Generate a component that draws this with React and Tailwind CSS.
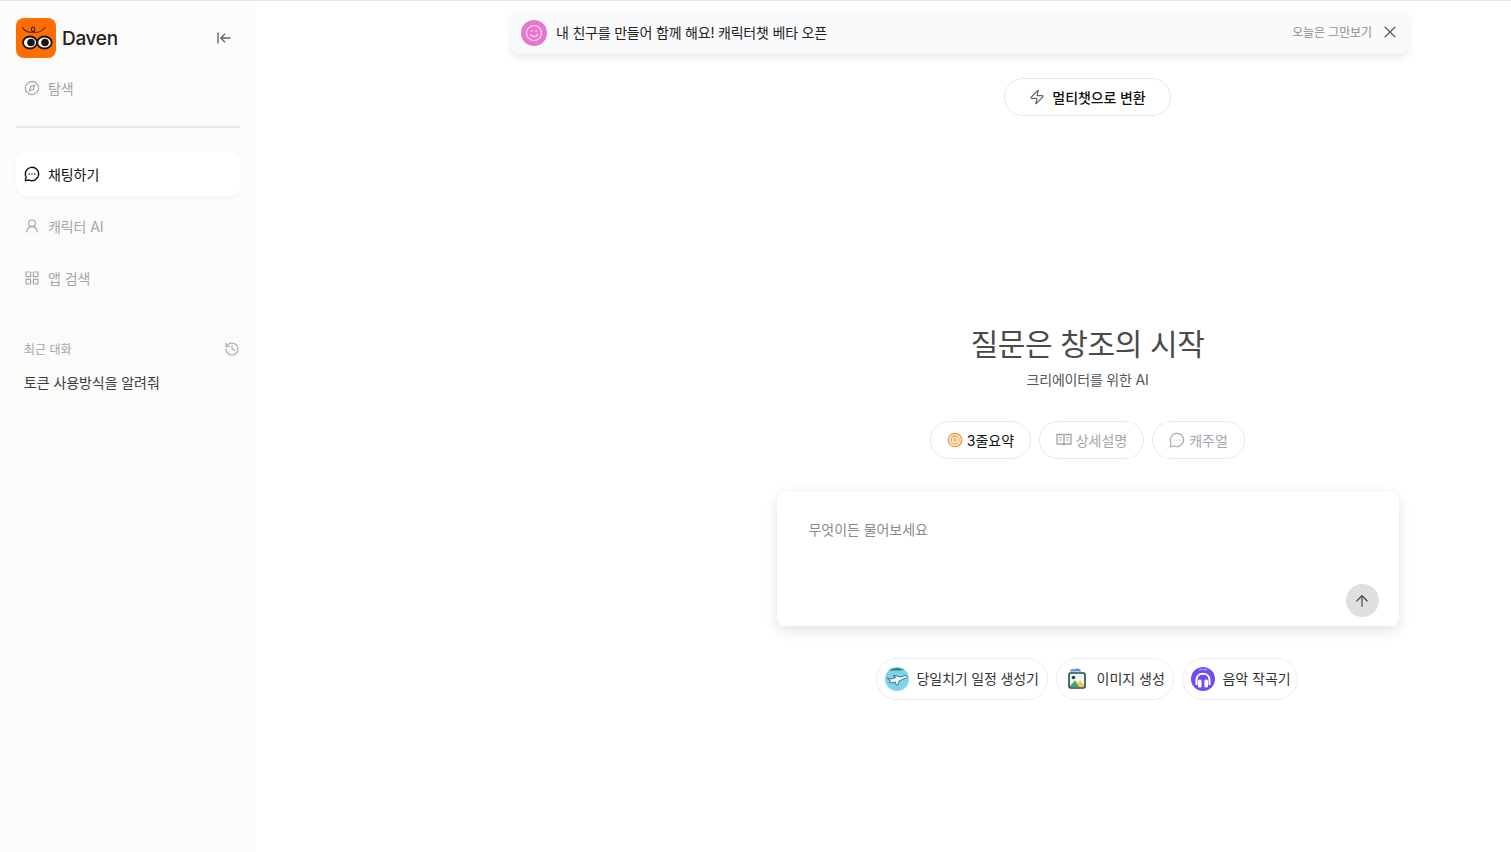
import React from "react";
import { Compass, MessageCircleMore, UserRound, LayoutGrid, History, X, Zap, ArrowUp } from "lucide-react";

function Logo() {
  return (
    <svg width="40" height="40" viewBox="0 0 40 40">
      <rect width="40" height="40" rx="8" fill="#ff6d00" />
      <path d="M6.5 9.5 C9 13.5 13 14.8 17 14 C15 12.5 14.8 9.8 16.8 9 C19 8.6 19.8 12 17 14 C21 15 26 13.5 29 9.5" fill="none" stroke="#3a1f0c" strokeWidth="1.1" strokeLinecap="round" />
      <ellipse cx="14" cy="24.5" rx="7" ry="6" fill="#fff" stroke="#1c1410" strokeWidth="1.8" />
      <ellipse cx="28.5" cy="24.5" rx="7.2" ry="6" fill="#fff" stroke="#1c1410" strokeWidth="1.8" />
      <circle cx="15" cy="24.5" r="3.8" fill="#1c1410" />
      <circle cx="29" cy="24.5" r="3.8" fill="#1c1410" />
    </svg>
  );
}

function NavItem({ icon, label, active, className = "" }) {
  return (
    <div className={"flex items-center gap-2 h-11 px-2 rounded-xl text-[14px] tracking-[-0.08px] " + (active ? "bg-white text-[#111] shadow-[0_1px_4px_rgba(0,0,0,0.04)] " : "text-[#a3a5a9] ") + className}>
      {icon}
      <span>{label}</span>
    </div>
  );
}

function Target() {
  return (
    <svg width="16" height="16" viewBox="0 0 16 16">
      <circle cx="8" cy="8" r="6.6" fill="none" stroke="#f79a3e" strokeWidth="1.5" />
      <circle cx="8" cy="8" r="4" fill="none" stroke="#f79a3e" strokeWidth="1.3" />
      <circle cx="8" cy="8" r="2" fill="#f7b56e" />
    </svg>
  );
}

function Book() {
  return (
    <svg width="16" height="16" viewBox="0 0 16 16" fill="none" stroke="currentColor" strokeWidth="1.3">
      <path d="M1 2.5 H6.5 C7.3 2.5 8 3.1 8 4 C8 3.1 8.7 2.5 9.5 2.5 H15 V12 H9.5 C8.7 12 8 12.5 8 13.5 C8 12.5 7.3 12 6.5 12 H1 Z M8 4 V13.5" />
      <path d="M3.2 5.5 H5.8 M3.2 8 H5.8 M10.2 5.5 H12.8 M10.2 8 H12.8" strokeWidth="1.1" />
    </svg>
  );
}

function Plane() {
  return (
    <svg width="24" height="24" viewBox="0 0 24 24">
      <circle cx="12" cy="12" r="12" fill="#7fd3ea" />
      <path d="M4 3.5 C7 1 15 0.5 19 3 C14 3.6 9 3.6 4 3.5Z" fill="#2f7d6b" />
      <path d="M2 11 L6 12 L11 10.5 L8 8.5 L10.5 8.5 L15 10 L20 8.5 C22.5 8 23 10 21 11 L14 14 L13 18 L11 18 L10.5 15 L6 16 L4 15 L5.5 14 Z" fill="#eef9fd" stroke="#2f6f8f" strokeWidth="0.9" />
    </svg>
  );
}

function ImageIcon() {
  return (
    <svg width="24" height="24" viewBox="0 0 24 24">
      <path d="M5 4.5 C5 2 8 1.6 9 2.6 C11 0.8 15 1 16 3.6 L16 4.5Z" fill="#5f8fe8" />
      <rect x="4" y="6" width="16" height="15" rx="1.5" fill="#f3f8f6" stroke="#1f4a4a" strokeWidth="1.6" />
      <circle cx="8.5" cy="10.5" r="1.8" fill="#1f4a4a" />
      <path d="M5 19 L10 13 L13 16 L15 13.5 L19 18 L19 20 L5 20Z" fill="#f1c84c" />
      <path d="M5 19 L10 14 L14 20 L5 20Z" fill="#3aa57e" />
    </svg>
  );
}

function Music() {
  return (
    <svg width="24" height="24" viewBox="0 0 24 24">
      <circle cx="12" cy="12" r="12" fill="#6f4df0" />
      <path d="M5.5 18 V13 C5.5 4.5 18.5 4.5 18.5 13 V18" fill="none" stroke="#fff" strokeWidth="2" />
      <rect x="7" y="12.5" width="3.6" height="8" rx="1.6" fill="#fff" />
      <rect x="13.4" y="12.5" width="3.6" height="8" rx="1.6" fill="#fff" />
      <path d="M8 3 C10 2 14 2 16 3" stroke="#c8bbf8" strokeWidth="1.2" fill="none" />
    </svg>
  );
}

export default function App() {
  return (
    <div
      className="flex h-[852px] overflow-hidden bg-white border-t border-[#e6e6e6] text-[#111]"
      style={{ fontFamily: 'Inter, "Noto Sans CJK KR", sans-serif' }}
    >
      <aside className="w-[255px] shrink-0 bg-[#fbfbfa] pl-4 pr-[15px] flex flex-col">
        <div className="flex items-center h-10 mt-[17px]">
          <Logo />
          <span className="ml-1.5 text-[19px] font-medium tracking-[-0.3px] text-[#222] leading-none">Daven</span>
          <svg className="ml-auto mr-[8px]" width="16" height="16" viewBox="0 0 16 16" fill="none" stroke="#666" strokeWidth="1.4">
            <path d="M2 2.5 V13.5 M14.5 8 H5 M9 3.8 L4.9 8 L9 12.2" />
          </svg>
        </div>
        <NavItem className="mt-2" icon={<Compass size={16} strokeWidth={1.7} />} label="탐색" />
        <div className="h-[2px] bg-[#e8e6e4] mt-[16px] w-[224px]" />
        <NavItem active className="mt-[24px] w-[225px]" icon={<MessageCircleMore size={16} strokeWidth={2.1} />} label="채팅하기" />
        <NavItem className="mt-2" icon={<UserRound size={16} strokeWidth={1.7} />} label="캐릭터 AI" />
        <NavItem className="mt-2" icon={<LayoutGrid size={16} strokeWidth={1.7} />} label="앱 검색" />
        <div className="flex items-center justify-between pl-2 mt-[41px] h-4 text-[12px] text-[#a3a5a5]">
          <span className="translate-y-px">최근 대화</span>
          <History size={16} strokeWidth={1.7} className="text-[#a9a9a9]" />
        </div>
        <div className="px-2 mt-[15px] text-[14px] tracking-[-0.08px] text-[#3c3c3c]">토큰 사용방식을 알려줘</div>
      </aside>

      <main className="flex-1 flex flex-col min-w-0">
        <div className="ml-[256px] w-[897px] h-[42px] mt-[11px] shrink-0 flex items-center pl-[10px] pr-[8px] rounded-lg bg-[#f9fafb] shadow-[0_3px_8px_rgba(0,0,0,0.09)]">
          <svg width="26" height="26" viewBox="0 0 26 26" fill="none">
            <circle cx="13" cy="13" r="13" fill="#e676cf" />
            <circle cx="13" cy="13" r="7.5" stroke="#fbdcf4" strokeWidth="1.2" />
            <path d="M9.5 14.5 C10.5 17 15.5 17 16.5 14.5 M10 11 H11.5 M14.5 11 H16" stroke="#fbdcf4" strokeWidth="1.2" strokeLinecap="round" />
          </svg>
          <span className="ml-[9px] text-[14px] tracking-[-0.2px] text-[#222] -translate-y-px">내 친구를 만들어 함께 해요! 캐릭터챗 베타 오픈</span>
          <span className="ml-auto text-[12px] tracking-[-0.1px] text-[#8d8d8d]">오늘은 그만보기</span>
          <X size={20} strokeWidth={1.4} className="ml-[8px] text-[#555] -translate-y-px" />
        </div>

        <div className="ml-[409px] flex-1 flex flex-col items-center">
          <div className="mt-[24px] h-[38px] w-[167px] flex items-center justify-center gap-[7px] rounded-full border border-[#e9e9e9] bg-white text-[14px] font-medium tracking-[-0.08px] text-[#111]">
            <Zap size={16} strokeWidth={1.7} className="text-[#666]" />
            <span>멀티챗으로 변환</span>
          </div>

          <h1 className="mt-[208px] text-[30px] leading-[40px] font-normal tracking-[-0.4px] text-[#4a4a48]">질문은 창조의 시작</h1>
          <p className="mt-[6px] text-[14px] leading-[20px] tracking-[-0.2px] text-[#555]">크리에이터를 위한 AI</p>

          <div className="mt-[31px] flex gap-2">
            <div className="h-[38px] w-[101px] flex items-center justify-center gap-1 rounded-full border border-[#e9e9e9] text-[14px] text-[#111]">
              <Target /><span>3줄요약</span>
            </div>
            <div className="h-[38px] w-[105px] flex items-center justify-center gap-1 rounded-full border border-[#e9e9e9] text-[14px] text-[#a3a5a9]">
              <Book /><span>상세설명</span>
            </div>
            <div className="h-[38px] w-[93px] flex items-center justify-center gap-1 rounded-full border border-[#e9e9e9] text-[14px] text-[#a3a5a9]">
              <MessageCircleMore size={16} strokeWidth={1.7} /><span>캐주얼</span>
            </div>
          </div>

          <div className="mt-[33px] w-[622px] h-[134px] rounded-lg bg-white shadow-[0_4px_14px_rgba(0,0,0,0.12)] flex flex-col pl-8 pt-[28px] pb-[9px] pr-[20px]">
            <div className="text-[14px] leading-5 tracking-[-0.05px] text-[#8a8a8a]">무엇이든 물어보세요</div>
            <div className="mt-auto self-end w-[33px] h-[33px] rounded-full bg-[#dfdfdd] flex items-center justify-center">
              <ArrowUp size={18} strokeWidth={1.5} className="text-[#444]" />
            </div>
          </div>

          <div className="mt-[32px] flex gap-[8px] -translate-x-px">
            <div className="h-[42px] w-[172px] flex items-center pl-2 gap-2 rounded-full border border-[#ececec] text-[14px] tracking-[-0.15px] text-[#333]">
              <Plane /><span className="-translate-y-px">당일치기 일정 생성기</span>
            </div>
            <div className="h-[42px] w-[118px] flex items-center pl-2 gap-2 rounded-full border border-[#ececec] text-[14px] text-[#333]">
              <ImageIcon /><span className="-translate-y-px">이미지 생성</span>
            </div>
            <div className="h-[42px] w-[116px] flex items-center pl-2 gap-2 rounded-full border border-[#ececec] text-[14px] tracking-[-0.05px] text-[#333]">
              <Music /><span className="-translate-y-px">음악 작곡기</span>
            </div>
          </div>
        </div>
      </main>
    </div>
  );
}
